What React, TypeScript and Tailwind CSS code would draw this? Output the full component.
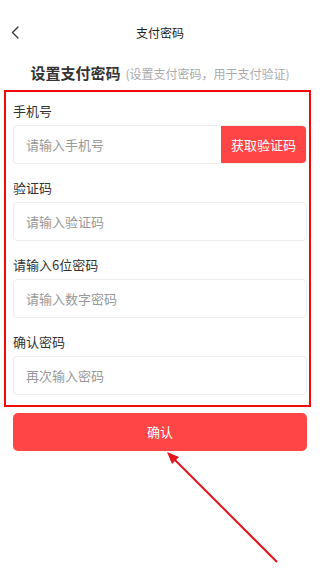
import { ReactNode } from 'react'

const font = { fontFamily: '"Noto Sans CJK SC", "Noto Sans", sans-serif' }

function Field({ label, children }: { label: string; children: ReactNode }) {
  return (
    <div className="mb-[15px] last:mb-0">
      <div className="text-[13px] leading-[18px] text-[#333]">{label}</div>
      <div className="mt-[5px]">{children}</div>
    </div>
  )
}

function TextInput({ placeholder }: { placeholder: string }) {
  return (
    <div className="flex h-[39px] items-center rounded-[4px] border border-[#eeeeee] bg-white pl-[12px] text-[13px] text-[#999]">
      {placeholder}
    </div>
  )
}

export default function App() {
  return (
    <div className="relative min-h-[568px] w-[320px] bg-white" style={font}>
      {/* Header */}
      <div className="flex h-[63px] items-center px-[11px] pt-[2px]">
        <div className="w-[40px]">
          <svg width="8" height="13" viewBox="0 0 8 13" fill="none">
            <path d="M7 1L1.5 6.5L7 12" stroke="#333" strokeWidth="1.3" strokeLinecap="round" strokeLinejoin="round" />
          </svg>
        </div>
        <div className="flex-1 text-center text-[12px] text-[#222]">支付密码</div>
        <div className="w-[40px]" />
      </div>

      {/* Heading */}
      <div className="flex items-baseline justify-center leading-[20px]">
        <span className="text-[15px] font-bold text-[#333]">设置支付密码</span>
        <span className="ml-[5px] text-[12px] text-[#aaa]">(设置支付密码，用于支付验证)</span>
      </div>

      {/* Form (annotated box) */}
      <div className="ml-[4px] mr-[9px] mt-[6px] border-2 border-[#f20a0a] pb-[10px] pl-[7px] pr-[2px] pt-[10px]">
        <Field label="手机号">
          <div className="flex h-[39px] items-stretch overflow-hidden rounded-[4px] border border-[#eeeeee] bg-white">
            <div className="flex flex-1 items-center pl-[12px] text-[13px] text-[#999]">请输入手机号</div>
            <button className="flex w-[85px] items-center justify-center rounded-r-[4px] bg-[#ff4545] text-[13px] text-white">
              获取验证码
            </button>
          </div>
        </Field>
        <Field label="验证码">
          <TextInput placeholder="请输入验证码" />
        </Field>
        <Field label="请输入6位密码">
          <TextInput placeholder="请输入数字密码" />
        </Field>
        <Field label="确认密码">
          <TextInput placeholder="再次输入密码" />
        </Field>
      </div>

      {/* Confirm */}
      <div className="px-[13px] pt-[6px]">
        <button className="flex h-[38px] w-full items-center justify-center rounded-[5px] bg-[#ff4545] text-[13px] text-white">
          确认
        </button>
      </div>

      {/* Annotation arrow */}
      <svg className="pointer-events-none absolute left-0 top-0" width="320" height="568" viewBox="0 0 320 568">
        <line x1="277" y1="562" x2="173" y2="458" stroke="#e3151b" strokeWidth="2" />
        <polygon points="167,452 179,457 172,464" fill="#e3151b" />
      </svg>
    </div>
  )
}
